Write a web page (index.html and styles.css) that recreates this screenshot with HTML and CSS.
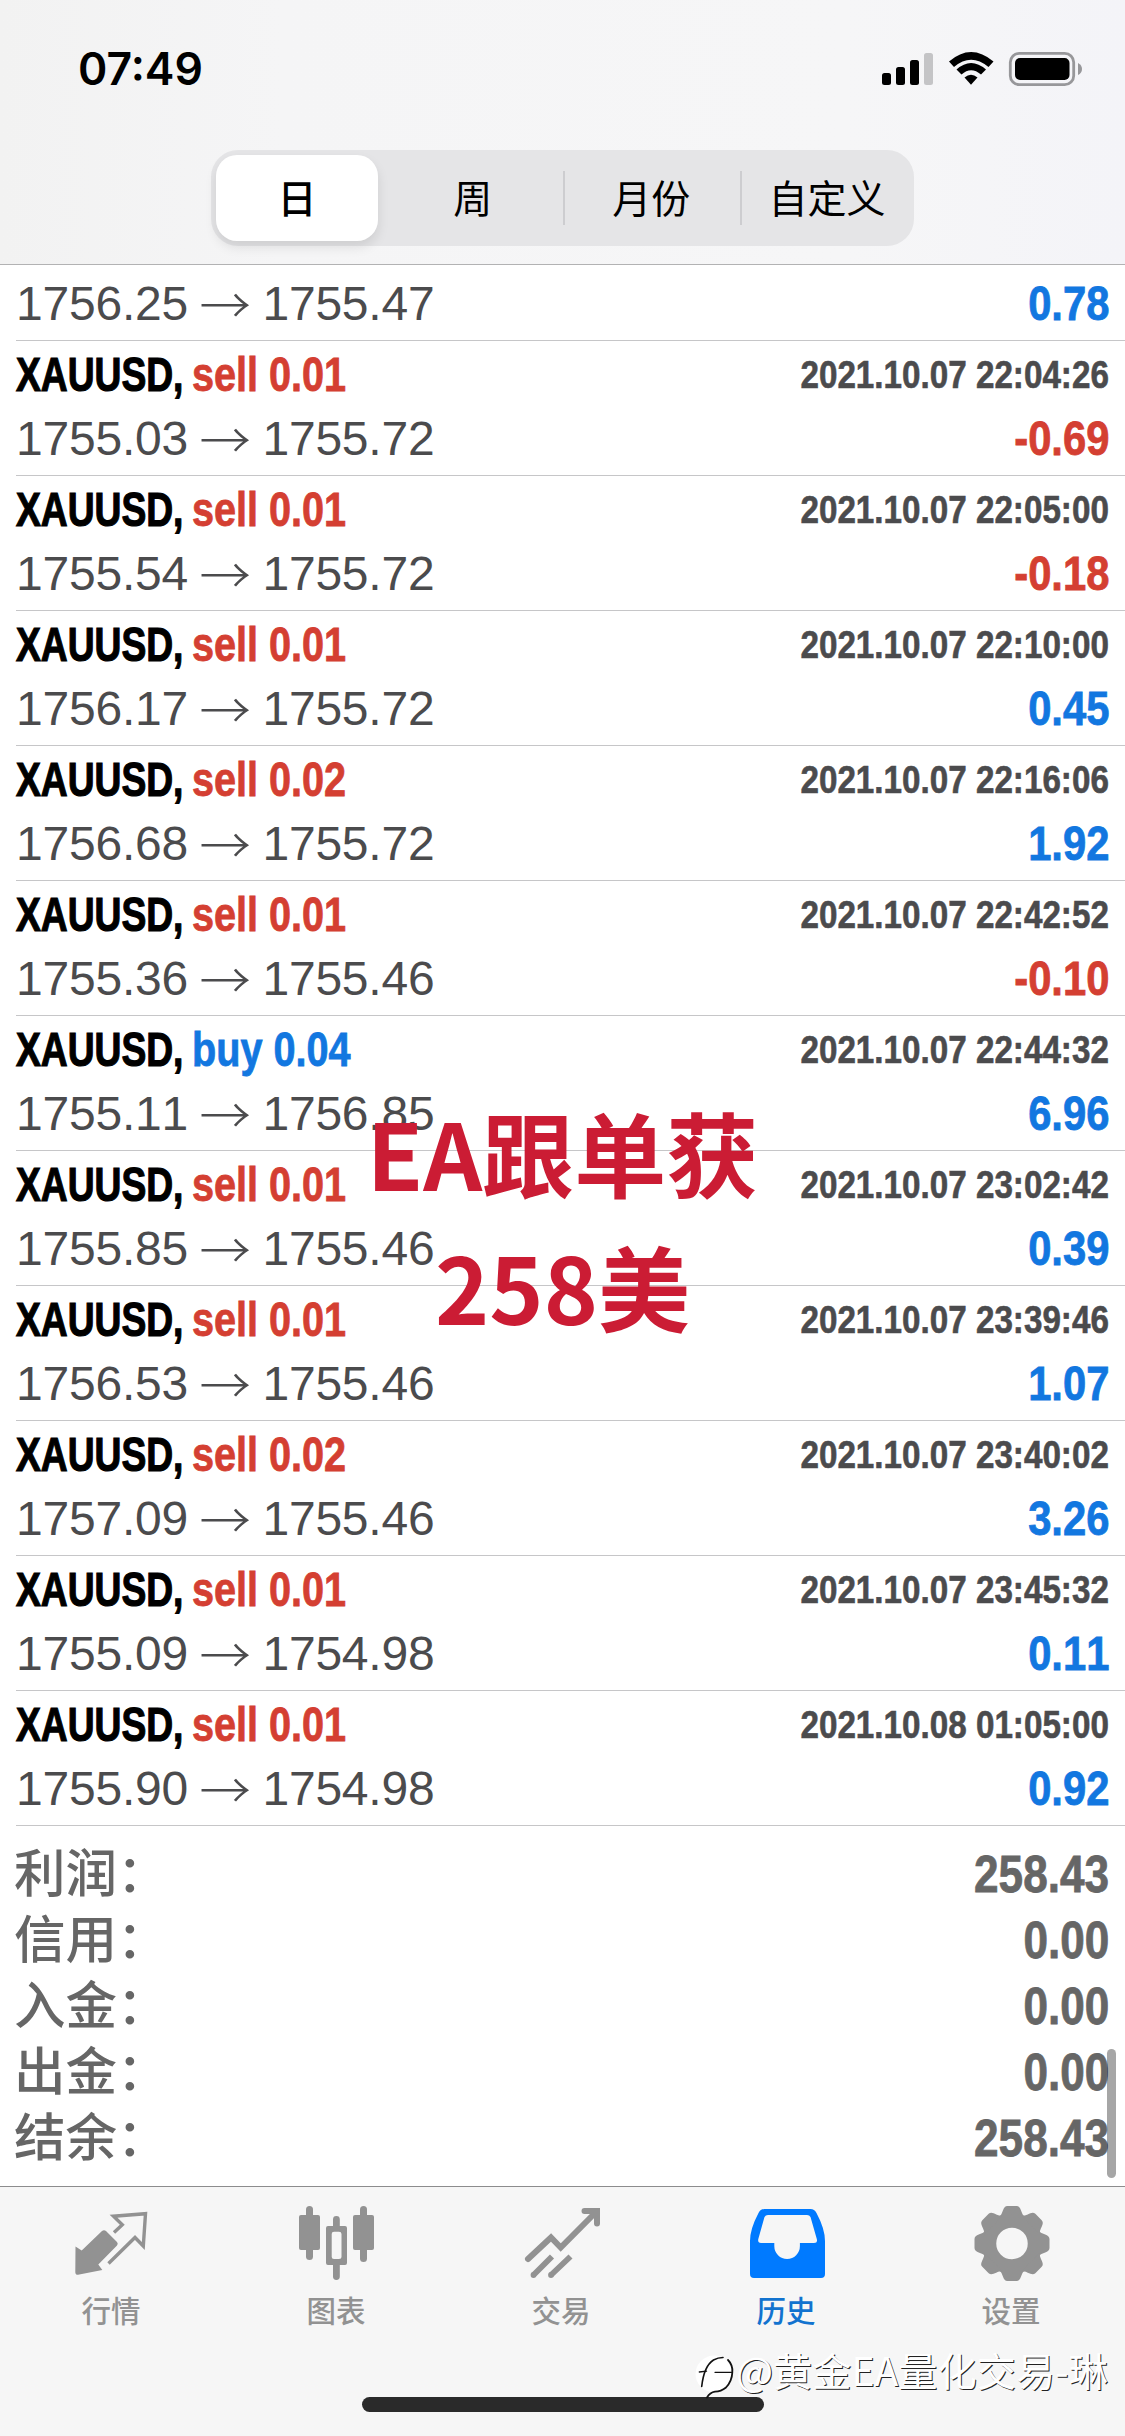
FILE: index.html
```html
<!DOCTYPE html>
<html lang="zh-CN">
<head>
<meta charset="utf-8">
<title>历史</title>
<link rel="stylesheet" href="styles.css">
</head>
<body>
<div class="screen">
  <header class="header">
    <div class="status">
      <span class="clock">07:49</span>
      <svg class="status-icons" width="204" height="40" viewBox="880 49 204 40">
        <rect x="882" y="73" width="9" height="12" rx="2.5"/>
        <rect x="896" y="67" width="9" height="18" rx="2.5"/>
        <rect x="910" y="60" width="9" height="25" rx="2.5"/>
        <rect x="924" y="53" width="9" height="32" rx="2.5" fill="#c4c4c6"/>
        <path d="M949 61.5Q971 42.500 993.500 61.500L988.500 67Q971 52.500 954 67Z"/>
        <path d="M956.500 69.500Q971 56.500 986 69.500L981 74.500Q971 66 961.500 74.500Z"/>
        <path d="M964.500 77.500Q971 72 977.500 77.500L971 84.800Z"/>
        <rect x="1010.300" y="53.300" width="63.400" height="31.400" rx="9" fill="none" stroke="#97979a" stroke-width="2.800"/>
        <rect x="1015" y="58" width="54.500" height="22" rx="5"/>
        <path d="M1078 63Q1082 65 1082 69T1078 75Z" fill="#97979a"/>
      </svg>
    </div>
    <nav class="segments">
      <span class="segment segment--on">日</span>
      <span class="segment segment--next">周</span>
      <span class="segment segment--line">月份</span>
      <span class="segment segment--line">自定义</span>
    </nav>
  </header>

  <main class="list">
    <div class="deal deal--cut">
      <div class="line"><span class="price">1756.25 <i class="arrow">→</i> 1755.47</span><b class="value up">0.78</b></div>
    </div>
    <div class="deal">
      <div class="line"><b class="symbol">XAUUSD,</b><b class="side down">sell 0.01</b><b class="date">2021.10.07 22:04:26</b></div>
      <div class="line"><span class="price">1755.03 <i class="arrow">→</i> 1755.72</span><b class="value down">-0.69</b></div>
    </div>
    <div class="deal">
      <div class="line"><b class="symbol">XAUUSD,</b><b class="side down">sell 0.01</b><b class="date">2021.10.07 22:05:00</b></div>
      <div class="line"><span class="price">1755.54 <i class="arrow">→</i> 1755.72</span><b class="value down">-0.18</b></div>
    </div>
    <div class="deal">
      <div class="line"><b class="symbol">XAUUSD,</b><b class="side down">sell 0.01</b><b class="date">2021.10.07 22:10:00</b></div>
      <div class="line"><span class="price">1756.17 <i class="arrow">→</i> 1755.72</span><b class="value up">0.45</b></div>
    </div>
    <div class="deal">
      <div class="line"><b class="symbol">XAUUSD,</b><b class="side down">sell 0.02</b><b class="date">2021.10.07 22:16:06</b></div>
      <div class="line"><span class="price">1756.68 <i class="arrow">→</i> 1755.72</span><b class="value up">1.92</b></div>
    </div>
    <div class="deal">
      <div class="line"><b class="symbol">XAUUSD,</b><b class="side down">sell 0.01</b><b class="date">2021.10.07 22:42:52</b></div>
      <div class="line"><span class="price">1755.36 <i class="arrow">→</i> 1755.46</span><b class="value down">-0.10</b></div>
    </div>
    <div class="deal">
      <div class="line"><b class="symbol">XAUUSD,</b><b class="side up">buy 0.04</b><b class="date">2021.10.07 22:44:32</b></div>
      <div class="line"><span class="price">1755.11 <i class="arrow">→</i> 1756.85</span><b class="value up">6.96</b></div>
    </div>
    <div class="deal">
      <div class="line"><b class="symbol">XAUUSD,</b><b class="side down">sell 0.01</b><b class="date">2021.10.07 23:02:42</b></div>
      <div class="line"><span class="price">1755.85 <i class="arrow">→</i> 1755.46</span><b class="value up">0.39</b></div>
    </div>
    <div class="deal">
      <div class="line"><b class="symbol">XAUUSD,</b><b class="side down">sell 0.01</b><b class="date">2021.10.07 23:39:46</b></div>
      <div class="line"><span class="price">1756.53 <i class="arrow">→</i> 1755.46</span><b class="value up">1.07</b></div>
    </div>
    <div class="deal">
      <div class="line"><b class="symbol">XAUUSD,</b><b class="side down">sell 0.02</b><b class="date">2021.10.07 23:40:02</b></div>
      <div class="line"><span class="price">1757.09 <i class="arrow">→</i> 1755.46</span><b class="value up">3.26</b></div>
    </div>
    <div class="deal">
      <div class="line"><b class="symbol">XAUUSD,</b><b class="side down">sell 0.01</b><b class="date">2021.10.07 23:45:32</b></div>
      <div class="line"><span class="price">1755.09 <i class="arrow">→</i> 1754.98</span><b class="value up">0.11</b></div>
    </div>
    <div class="deal">
      <div class="line"><b class="symbol">XAUUSD,</b><b class="side down">sell 0.01</b><b class="date">2021.10.08 01:05:00</b></div>
      <div class="line"><span class="price">1755.90 <i class="arrow">→</i> 1754.98</span><b class="value up">0.92</b></div>
    </div>
    <section class="summary">
      <div class="total"><span class="label">利润：</span><b class="sum">258.43</b></div>
      <div class="total"><span class="label">信用：</span><b class="sum">0.00</b></div>
      <div class="total"><span class="label">入金：</span><b class="sum">0.00</b></div>
      <div class="total"><span class="label">出金：</span><b class="sum">0.00</b></div>
      <div class="total"><span class="label">结余：</span><b class="sum">258.43</b></div>
    </section>
  </main>

  <footer class="tabbar">
    <a class="tab">
      <svg class="tab-icon" viewBox="68 2200 88 84">
        <path d="M75.500 2246.500L81.700 2250.500L102 2231Q104 2229.500 106 2231L117 2242Q118.500 2243.500 117 2245.500L98.300 2264.500L102.300 2270L78 2274.800Q75.300 2275 75.300 2272Z"/>
        <path d="M114 2232.500L122.300 2224.700L113.500 2216.200L145.500 2213.700L143.300 2246L135 2237.500L108.500 2263.500" fill="none" stroke="#929292" stroke-width="3.400"/>
      </svg>
      <span class="tab-label">行情</span>
    </a>
    <a class="tab">
      <svg class="tab-icon" viewBox="293 2200 88 84">
        <rect x="306" y="2206" width="7" height="54" rx="3.500"/><rect x="299" y="2215" width="21" height="35" rx="2"/>
        <rect x="360" y="2206" width="7" height="56" rx="3.500"/><rect x="353" y="2215" width="21" height="35" rx="2"/>
        <path d="M333 2226V2219.500A3.400 3.400 0 0 1 339.800 2219.500V2226H345Q347 2226 347 2228V2263Q347 2265 345 2265H339.800V2276.500A3.400 3.400 0 0 1 333 2276.500V2265H328Q326 2265 326 2263V2228Q326 2226 328 2226ZM334 2231.700Q331.700 2231.700 331.700 2234V2257Q331.700 2259 334 2259H339Q341.500 2259 341.500 2257V2234Q341.500 2231.700 339 2231.700Z" fill-rule="evenodd"/>
      </svg>
      <span class="tab-label">图表</span>
    </a>
    <a class="tab">
      <svg class="tab-icon" viewBox="517 2200 88 84">
        <g fill="none" stroke="#929292" stroke-width="6" stroke-linecap="round">
          <path d="M527 2259L550 2237.500L559.700 2247.500L595 2212"/>
          <path d="M583.500 2211H596V2223.500"/>
        </g>
        <path d="M532.500 2275L551 2256.500M550 2275L569.500 2256.500" fill="none" stroke="#929292" stroke-width="5.800"/>
        <circle cx="532.500" cy="2275" r="2.900"/><circle cx="550" cy="2275" r="2.900"/>
      </svg>
      <span class="tab-label">交易</span>
    </a>
    <a class="tab tab--on">
      <svg class="tab-icon" viewBox="742 2200 88 84">
        <path fill-rule="evenodd" d="M763.500 2209H809.500Q813.500 2209 815.500 2213Q824 2229 824 2241V2274Q824 2278 820 2278H753Q749 2278 749 2274V2241Q749 2229 757.500 2213Q759.500 2209 763.500 2209ZM767 2215Q764.500 2215 763.500 2217L757.300 2239Q756.500 2243 760 2243H773.300V2246A12.800 13 0 0 0 798.900 2246V2243H813Q816.800 2243 815.800 2239L809.500 2217Q808.500 2215 806 2215Z"/>
      </svg>
      <span class="tab-label">历史</span>
    </a>
    <a class="tab">
      <svg class="tab-icon" viewBox="-44 -43.500 88 84">
        <defs><path id="tooth" d="M-13 -26C-8.500 -30 -9.500 -37.500 -4.500 -37.500H4.500C9.500 -37.500 8.500 -30 13 -26Z"/></defs>
        <circle r="23" fill="none" stroke="#929292" stroke-width="14.500"/>
        <use href="#tooth"/><use href="#tooth" transform="rotate(45)"/><use href="#tooth" transform="rotate(90)"/><use href="#tooth" transform="rotate(135)"/>
        <use href="#tooth" transform="rotate(180)"/><use href="#tooth" transform="rotate(225)"/><use href="#tooth" transform="rotate(270)"/><use href="#tooth" transform="rotate(315)"/>
      </svg>
      <span class="tab-label">设置</span>
    </a>
  </footer>

  <div class="scrollbar"></div>
  <div class="caption">EA跟单获<br>258美</div>
  <div class="home-bar"></div>
  <div class="watermark">
    <svg class="watermark-logo" width="42" height="46" viewBox="0 0 42 46">
      <circle cx="19" cy="20" r="18.500" fill="#fff"/>
      <g fill="none" stroke="#111" stroke-linecap="round">
        <path d="M6.700 32.500Q9 12 18.500 6Q23 3.500 28 3.500" stroke-width="1.600"/>
        <path d="M33 6Q38 11 37.300 18.500Q37 27 31 33.500Q26 37.500 20 37.700Q15 38.500 12 43.500" stroke-width="1.800"/>
        <path d="M4.300 18L11.500 17.200M20 18.300H36.500" stroke-width="1.300"/>
      </g>
    </svg>
    <span class="watermark-text">@黄金EA量化交易-琳</span>
  </div>
</div>
</body>
</html>
```
FILE: styles.css
```css
* { box-sizing: border-box; }

body {
  margin: 0;
  background: #fff;
  font-family: "Liberation Sans", "Noto Sans CJK SC", sans-serif;
  font-kerning: none;
}

.screen {
  position: relative;
  display: flex;
  flex-direction: column;
  width: 1125px;
  height: 2436px;
  overflow: hidden;
}

.header {
  flex: none;
  display: flex;
  flex-direction: column;
  align-items: center;
  height: 265px;
  background: linear-gradient(90deg, #f2f2f2, #f5f5f6 25%, #f6f6f7 75%, #f4f4f8);
  border-bottom: 1px solid #b2b2b3;
}

.status {
  display: flex;
  justify-content: space-between;
  align-items: center;
  width: 100%;
  height: 138px;
  padding: 0 41px 0 78px;
}

.clock {
  font: 600 44.500px/50px Inter, sans-serif;
}

.status-icons { display: block; }

.segments {
  display: grid;
  grid-template-columns: 162px 184.500px 177.500px 1fr;
  width: 703px;
  height: 96px;
  margin-top: 12px;
  padding: 5px 0 5px 5px;
  border-radius: 27px;
  background: #e5e5e7;
}

.segment {
  display: flex;
  align-items: center;
  justify-content: center;
  padding-bottom: 3px;
  font: 400 39px/1 "Noto Sans CJK SC", sans-serif;
}

.segment--on {
  border-radius: 21px;
  background: #fff;
  font-weight: 500;
  box-shadow: 0 6px 12px rgba(0, 0, 0, .1);
}

.segment--next { padding-left: 5px; }

.segment--line {
  background: linear-gradient(#cdcdd0, #cdcdd0) left center / 2px 54px no-repeat;
}

.list { flex: none; height: 1921px; }

.deal {
  height: 135px;
  margin-left: 16px;
  padding: 2px 16px 0 0;
  border-bottom: 1px solid #c6c6c8;
}

.deal--cut {
  height: 76px;
  padding-top: 7px;
}

.line {
  display: flex;
  height: 64px;
  line-height: 64px;
  font-size: 48px;
  white-space: nowrap;
}

.deal--cut .line { height: 60px; }

.price {
  color: #4b4b4d;
  letter-spacing: -.2px;
}

.arrow {
  display: inline-block;
  width: 48px;
  height: 64px;
  vertical-align: top;
  text-align: center;
  font: 300 48px/60px "Noto Sans CJK SC", sans-serif;
  transform: scaleX(1.07);
}

.symbol {
  width: 176px;
  transform: scaleX(.775);
  transform-origin: left;
  color: #000;
  -webkit-text-stroke: 1.200px currentColor;
}

.side {
  transform: scaleX(.825);
  transform-origin: left;
  -webkit-text-stroke: .8px currentColor;
}

.date {
  margin-left: auto;
  font-size: 38px;
  color: #4b4b4d;
  transform: scaleX(.874);
  transform-origin: right;
  -webkit-text-stroke: .6px currentColor;
}

.value {
  margin-left: auto;
  transform: scaleX(.87);
  transform-origin: right;
  -webkit-text-stroke: .8px currentColor;
}

.up { color: #1277e0; }
.down { color: #d43f32; }

.summary {
  display: flex;
  flex-direction: column;
  padding: 15px 16px 0;
}

.total {
  display: flex;
  justify-content: space-between;
  height: 66px;
  line-height: 66px;
  color: #666;
  font-size: 51px;
}

.label {
  margin: -4px 0 0 -2px;
  font: 500 51.500px/66px "Noto Sans CJK SC", sans-serif;
}

.sum {
  margin-top: 1px;
  transform: scaleX(.865);
  transform-origin: right;
  -webkit-text-stroke: .8px currentColor;
}

.tabbar {
  flex: 1;
  display: grid;
  grid-template-columns: repeat(5, 1fr);
  border-top: 1px solid #8c8c8d;
  background: #f6f6f6;
}

.tab {
  display: flex;
  flex-direction: column;
  align-items: center;
  margin-left: -2px;
  padding-top: 13px;
  color: #929292;
  fill: #929292;
}

.tab--on { color: #1273cf; fill: #007aff; }

.tab-icon { display: block; width: 88px; height: 84px; }

.tab-label {
  margin: 4px 1px 0 0;
  font: 500 29.500px/42px "Noto Sans CJK SC", sans-serif;
}

.scrollbar {
  position: absolute;
  left: 1107px;
  top: 2049px;
  width: 9px;
  height: 129px;
  border-radius: 5px;
  background: rgba(0, 0, 0, .35);
}

.caption {
  position: absolute;
  left: 0;
  right: 0;
  top: 1084px;
  text-align: center;
  color: #cb1c34;
  font: 700 92px/133.500px "Noto Sans CJK SC", sans-serif;
}

.home-bar {
  position: absolute;
  left: 362px;
  top: 2397px;
  width: 402px;
  height: 15px;
  border-radius: 8px;
  background: #2a2a2a;
}

.watermark {
  position: absolute;
  left: 695px;
  top: 2354px;
  display: flex;
  align-items: flex-start;
}

.watermark-text {
  margin: -13px 0 0 -1px;
  color: #fff;
  font: 400 39.200px/56px "Noto Sans CJK SC", sans-serif;
  text-shadow: 1px 1px 0 #222;
  white-space: nowrap;
}
```
